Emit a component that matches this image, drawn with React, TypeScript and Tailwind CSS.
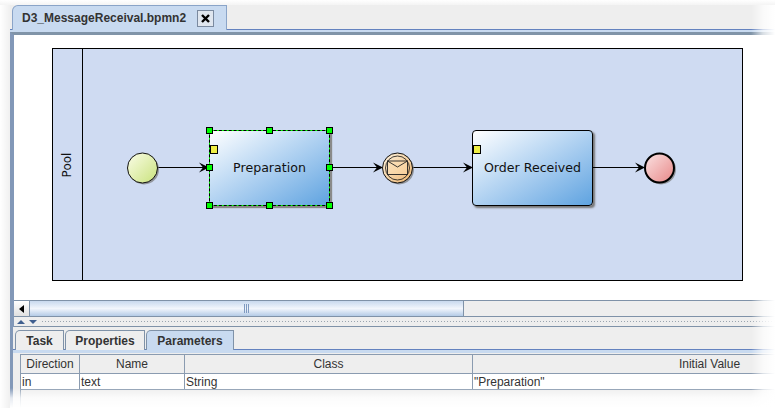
const FONT = "font-['Liberation_Sans',Arial,sans-serif]";

const Handle = ({ x, y }: { x: number; y: number }) => (
  <span
    className="absolute w-[7px] h-[7px] bg-[#00ff00] border border-black"
    style={{ left: x - 3, top: y - 3 }}
  />
);

const Arrow = ({ x1, x2 }: { x1: number; x2: number }) => (
  <g>
    <line x1={x1} y1={167.5} x2={x2 - 3} y2={167.5} stroke="#000" strokeWidth="1.2" />
    <path d={`M${x2 - 10} 162.5 L${x2} 167.5 L${x2 - 10} 172.5 L${x2 - 6} 167.5 Z`} fill="#000" />
  </g>
);

const Marker = () => (
  <span className="absolute left-0 top-[14px] w-[8px] h-[9px] bg-[#eeee44] border border-black" />
);

const Preparation = () => (
  <div className="absolute left-[209px] top-[130px] h-[76px] w-[121px] flex bg-[#00ff00] border border-dashed border-black shadow-[2px_2px_1px_#8a8a8a]">
    <div className="relative flex-1 flex items-center justify-center bg-gradient-to-br from-white to-[#5ea3e0] text-[12.6px] text-[#111] font-['DejaVu_Sans',sans-serif]">
      <span className="absolute left-0 top-[14px] w-[8px] h-[9px] bg-[#eeee44] border border-black" />
      Preparation
    </div>
  </div>
);

const OrderReceived = () => (
  <div className="absolute left-[472px] top-[130px] h-[76px] w-[121px] flex items-center justify-center bg-gradient-to-br from-white to-[#5ea3e0] border border-black rounded-[4px] shadow-[2px_2px_2px_#777] text-[12.6px] text-[#111] font-['DejaVu_Sans',sans-serif]">
    <Marker />
    Order Received
  </div>
);

const Diagram = () => (
  <div className="relative flex-1 bg-white overflow-hidden">
    {/* coordinates in here are page coordinates shifted by the canvas origin */}
    <div className="absolute left-[-14px] top-[-35px] w-[775px] h-[408px]">
      <div className="absolute left-[52px] top-[48px] w-[691px] h-[233px] bg-[#cfdbf2] border border-black flex">
        <div className="w-[30px] border-r border-black flex items-center justify-center">
          <span className="-rotate-90 text-[12px] text-[#111] font-['DejaVu_Sans',sans-serif]">Pool</span>
        </div>
      </div>
      <Preparation />
      <OrderReceived />
      <svg className="absolute left-0 top-0" width="775" height="408">
        <defs>
          <linearGradient id="startFill" x1="0" y1="0" x2="1" y2="1">
            <stop offset="0" stopColor="#fbfde8" />
            <stop offset="1" stopColor="#c9e27c" />
          </linearGradient>
          <linearGradient id="msgFill" x1="0" y1="0" x2="1" y2="1">
            <stop offset="0" stopColor="#fdf3e0" />
            <stop offset="1" stopColor="#eeb56f" />
          </linearGradient>
          <linearGradient id="endFill" x1="0" y1="0" x2="1" y2="1">
            <stop offset="0" stopColor="#fbe3e3" />
            <stop offset="1" stopColor="#e88787" />
          </linearGradient>
        </defs>
        <Arrow x1={157} x2={209} />
        <Arrow x1={330} x2={383} />
        <Arrow x1={412} x2={473} />
        <Arrow x1={593} x2={645} />
        <circle cx="144" cy="169.5" r="15" fill="#777" opacity="0.7" />
        <circle cx="142.5" cy="168" r="15" fill="url(#startFill)" stroke="#111" strokeWidth="1" />
        <circle cx="399" cy="169.5" r="15" fill="#777" opacity="0.7" />
        <circle cx="397.5" cy="168" r="15" fill="url(#msgFill)" stroke="#111" strokeWidth="1" />
        <circle cx="397.5" cy="168" r="12" fill="none" stroke="#111" strokeWidth="0.8" />
        <rect x="387.5" y="161" width="20" height="13.5" fill="#fbdcae" fillOpacity="0.5" stroke="#222" strokeWidth="0.9" />
        <path d="M387.5 161 L397.5 167 L407.5 161" fill="none" stroke="#222" strokeWidth="0.9" />
        <circle cx="661" cy="169.5" r="15" fill="#777" opacity="0.7" />
        <circle cx="659.5" cy="168" r="14.5" fill="url(#endFill)" stroke="#000" strokeWidth="2" />
      </svg>
      <Handle x={209} y={130} />
      <Handle x={269} y={130} />
      <Handle x={329} y={130} />
      <Handle x={209} y={167} />
      <Handle x={329} y={167} />
      <Handle x={209} y={205} />
      <Handle x={269} y={205} />
      <Handle x={329} y={205} />
    </div>
  </div>
);

const ScrollBar = () => (
  <div className="h-[17px] flex border-t border-b border-[#7f92a8] bg-[#eeeeee]">
    <div className="w-[16px] flex items-center justify-center border-r border-[#7f92a8] bg-gradient-to-b from-white to-[#e0e0e0]">
      <span className="w-0 h-0 border-y-[4px] border-y-transparent border-r-[5px] border-r-black" />
    </div>
    <div className="w-[434px] flex items-center justify-center border-r border-[#7f92a8] bg-gradient-to-b from-[#c8d9ee] via-[#f2f6fc] to-[#b4cbe6]">
      <span className="w-[5px] h-[9px] border-x border-[#7f9ac0] flex justify-center">
        <span className="w-px h-full bg-[#7f9ac0]" />
      </span>
    </div>
  </div>
);

const Splitter = () => (
  <div className="h-[10px] flex items-center gap-[4px] pl-[3px] border-b border-[#7f92a8] bg-[#eeeeee]">
    <span className="w-0 h-0 border-x-[4px] border-x-transparent border-b-[4px] border-b-[#3f5f8f]" />
    <span className="w-0 h-0 border-x-[4px] border-x-transparent border-t-[4px] border-t-[#3f5f8f]" />
    <span className="flex-1 h-[3px] bg-[radial-gradient(#9aa5b0_1px,transparent_1px)] bg-[length:3px_3px]" />
  </div>
);

const BottomTab = ({ label, width, active }: { label: string; width: number; active?: boolean }) => (
  <div
    className={`h-[20px] -mb-px flex items-center justify-center text-[12px] font-bold text-[#333] border border-b-0 border-[#7f92a8] rounded-tl-[5px] ${
      active ? "bg-[#c8daf0]" : "bg-[#eeeeee]"
    }`}
    style={{ width }}
  >
    {label}
  </div>
);

const HeaderCell = ({ label, width }: { label: string; width: number }) => (
  <div
    className="shrink-0 flex items-center justify-center border-r border-[#8a9bb0]"
    style={{ width }}
  >
    {label}
  </div>
);

const RowCell = ({ label, width }: { label: string; width: number }) => (
  <div className="shrink-0 flex items-center pl-px border-r border-[#8a9bb0]" style={{ width }}>
    {label}
  </div>
);

const ParamTable = () => (
  <div className="flex-1 ml-[7px] mt-px flex flex-col overflow-hidden border-l border-t border-[#8a9bb0] text-[12px] text-[#333] bg-[#eeeeee]">
    <div className="h-[19px] flex border-b border-[#8a9bb0]">
      <HeaderCell label="Direction" width={59} />
      <HeaderCell label="Name" width={105} />
      <HeaderCell label="Class" width={288} />
      <HeaderCell label="Initial Value" width={474} />
    </div>
    <div className="h-[16px] flex bg-white border-b border-[#8a9bb0]">
      <RowCell label="in" width={59} />
      <RowCell label="text" width={105} />
      <RowCell label="String" width={288} />
      <RowCell label={'"Preparation"'} width={474} />
    </div>
  </div>
);

export default function App() {
  return (
    <div className={`relative w-[775px] h-[408px] overflow-hidden bg-white ${FONT}`}>
      <div className="h-full pl-[10px] pt-[5px] flex flex-col">
        {/* editor tab strip */}
        <div className="h-[25px] flex items-end pl-[2px] bg-[#eeeeee] border-b border-[#6382bf]">
          <div className="h-[25px] w-[215px] -mb-px flex items-center pl-[9px] gap-[11px] bg-[#c8daf0] border border-b-0 border-[#8aa4c8] rounded-tl-[6px] text-[12px] font-bold text-[#333]">
            <span>D3_MessageReceival.bpmn2</span>
            <span className="w-[17px] h-[17px] flex items-center justify-center bg-[#dfe6ef] border border-[#7a8aa0]">
              <svg width="9" height="9" viewBox="0 0 9 9">
                <path d="M1 1 L8 8 M8 1 L1 8" stroke="#000" strokeWidth="2.4" />
              </svg>
            </span>
          </div>
        </div>
        <div className="h-[2px] bg-[#c8daf0]" />
        <div className="flex-1 flex flex-col border-l-4 border-l-[#8298b8] border-t-[3px] border-t-[#8094a8] min-h-0">
          <Diagram />
          <ScrollBar />
          <Splitter />
          <div className="h-[81px] flex flex-col bg-[#eeeeee] -ml-px">
            <div className="h-[3px]" />
            <div className="flex pl-[2px] gap-px border-b border-[#6382bf] h-[20px]">
              <BottomTab label="Task" width={49} />
              <BottomTab label="Properties" width={80} />
              <BottomTab label="Parameters" width={88} active />
            </div>
            <div className="h-[3px] bg-[#c8daf0]" />
            <div className="flex-1 flex min-h-0">
              <ParamTable />
            </div>
          </div>
        </div>
      </div>
      {/* soft fade of the cut-out screenshot edges */}
      <div className="absolute top-0 right-0 w-[24px] h-full bg-gradient-to-l from-white via-white/70 to-transparent" />
      <div className="absolute bottom-0 left-0 w-full h-[20px] bg-gradient-to-t from-white via-white/80 to-transparent" />
      <div className="absolute top-0 left-0 w-[10px] h-full bg-gradient-to-r from-white to-[#f0f0f0]" />
      <div className="absolute top-0 left-0 w-full h-[5px] bg-gradient-to-b from-white to-[#f4f4f4]" />
    </div>
  );
}
